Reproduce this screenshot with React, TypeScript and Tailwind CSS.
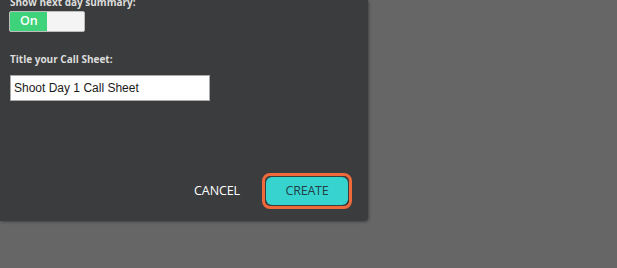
import { useState } from "react";

export default function App() {
  const [on, setOn] = useState(true);
  const [title, setTitle] = useState("Shoot Day 1 Call Sheet");

  return (
    <div className="h-[268px] w-[617px] overflow-hidden bg-[#666666]">
      <div
        className="flex h-[221px] w-[368px] flex-col rounded-br-[4px] bg-[#3b3c3d] pl-[10px] shadow-[1px_1px_3px_rgba(0,0,0,0.35)]"
        style={{ fontFamily: '"Open Sans", "Liberation Sans", sans-serif' }}
      >
        {/* Next day summary */}
        <div className="-mt-[6px] text-[10px] font-bold leading-[16px] text-[#dcdcdc]">
          Show next day summary:
        </div>
        <button
          onClick={() => setOn(!on)}
          className="mt-[1px] flex h-[21px] w-[76px] -ml-px overflow-hidden rounded-[2px] border border-[#bdbdbd] bg-[#f4f4f4]"
        >
          <span className="flex h-full w-[37px] items-center bg-[#3ed37a] pl-[10px] text-[12.5px] font-semibold leading-none text-white">
            On
          </span>
        </button>

        {/* Title */}
        <div className="mt-[19px] text-[10px] font-bold leading-[16px] text-[#dcdcdc]">
          Title your Call Sheet:
        </div>
        <input
          value={title}
          onChange={(e) => setTitle(e.target.value)}
          className="mt-[8px] h-[26px] w-[200px] border border-[#a9a9a9] bg-white px-[3px] text-[12px] text-[#1a1a1a] outline-none"
          style={{ fontFamily: '"Liberation Sans", Arial, sans-serif' }}
        />

        {/* Actions */}
        <div className="mt-auto mb-[12px] flex items-center justify-end gap-[22px] pr-[16px]">
          <button className="text-[12.5px] tracking-[-0.1px] text-white">CANCEL</button>
          <span className="rounded-[8px] border-[3px] border-[#f0693a] p-px">
            <button className="flex h-[28px] w-[82px] items-center justify-center rounded-[6px] bg-[#37d3cf] text-[12.5px] tracking-[-0.2px] text-[#213f45]">
              CREATE
            </button>
          </span>
        </div>
      </div>
    </div>
  );
}
